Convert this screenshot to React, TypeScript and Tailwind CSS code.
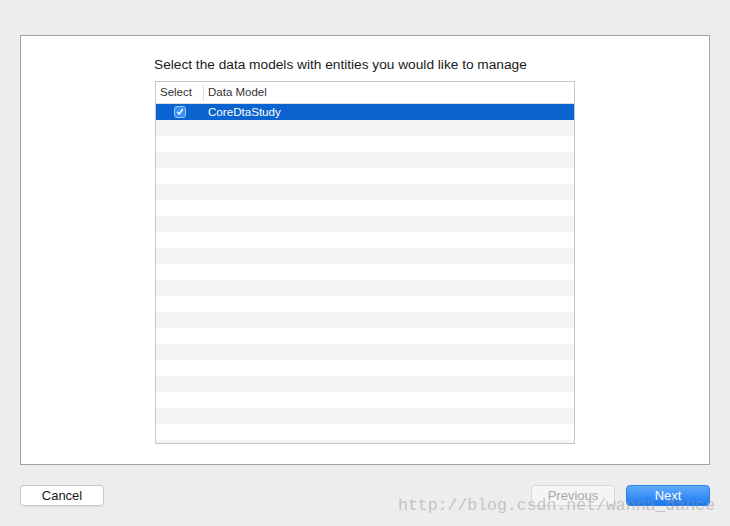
import React from "react";

export default function App() {
  const rows = Array.from({ length: 22 }, (_, i) => i);
  return (
    <div className="relative w-[730px] h-[526px] overflow-hidden bg-[#ededed] pt-[35px] pl-[20px]" style={{ fontFamily: '"Helvetica Neue", "Liberation Sans", Arial, sans-serif' }}>
      <div className="w-[690px] h-[430px] bg-white border border-[#a3a3a3] pl-[133px] pt-[21px]">
        <div className="text-[13.7px] leading-[16px] text-[#1a1a1a]">Select the data models with entities you would like to manage</div>
        <div className="mt-[8px] ml-[1px] w-[420px] h-[363px] border border-[#c6c6c6] overflow-hidden flex flex-col">
          <div className="h-[22px] shrink-0 flex items-center border-b border-[#dcdcdc] text-[11.5px] text-[#333]">
            <div className="w-[48px] h-[16px] flex items-center pl-[4px] border-r border-[#dcdcdc]">Select</div>
            <div className="pl-[4px]">Data Model</div>
          </div>
          {rows.map((i) =>
            i === 0 ? (
              <div key={i} className="h-[16px] shrink-0 bg-[#0b63cf] flex items-center text-[11.6px] text-white">
                <div className="w-[48px] flex items-center">
                  <div className="ml-[18px] w-[12px] h-[12px] rounded-[3px] bg-[#3a90f4] border border-[#9cc6fb] flex items-center justify-center">
                    <svg width="8" height="8" viewBox="0 0 8 8">
                      <path d="M1.5 4.3 L3.2 6 L6.5 1.5" stroke="white" strokeWidth="1.4" fill="none" strokeLinecap="round" strokeLinejoin="round" />
                    </svg>
                  </div>
                </div>
                <div className="pl-[4px]">CoreDtaStudy</div>
              </div>
            ) : (
              <div key={i} className={`h-[16px] shrink-0 ${i % 2 === 1 ? "bg-[#f4f4f4]" : "bg-white"}`} />
            )
          )}
        </div>
      </div>
      <div className="mt-[20px] w-[690px] flex items-center text-[13px]">
        <button className="w-[84px] h-[21px] rounded-[4px] bg-white border border-[#c8c8c8] shadow-[0_1px_0_rgba(0,0,0,0.06)] text-[#1a1a1a] leading-[19px]">Cancel</button>
        <div className="flex-1" />
        <button className="w-[84px] h-[21px] rounded-[4px] bg-[#f5f5f5] border border-[#d9d9d9] text-[#a8a8a8] leading-[19px]">Previous</button>
        <button className="ml-[11px] w-[84px] h-[21px] rounded-[4px] bg-gradient-to-b from-[#5fabfb] to-[#1577f3] border border-[#2c80ee] text-white leading-[19px]">Next</button>
      </div>
      <div className="absolute left-[398px] top-[494px] text-[16.5px] leading-[24px] text-[rgba(150,150,150,0.5)] whitespace-nowrap" style={{ fontFamily: '"Liberation Mono", monospace' }}>
        http://blog.csdn.net/wanna_dance
      </div>
    </div>
  );
}
